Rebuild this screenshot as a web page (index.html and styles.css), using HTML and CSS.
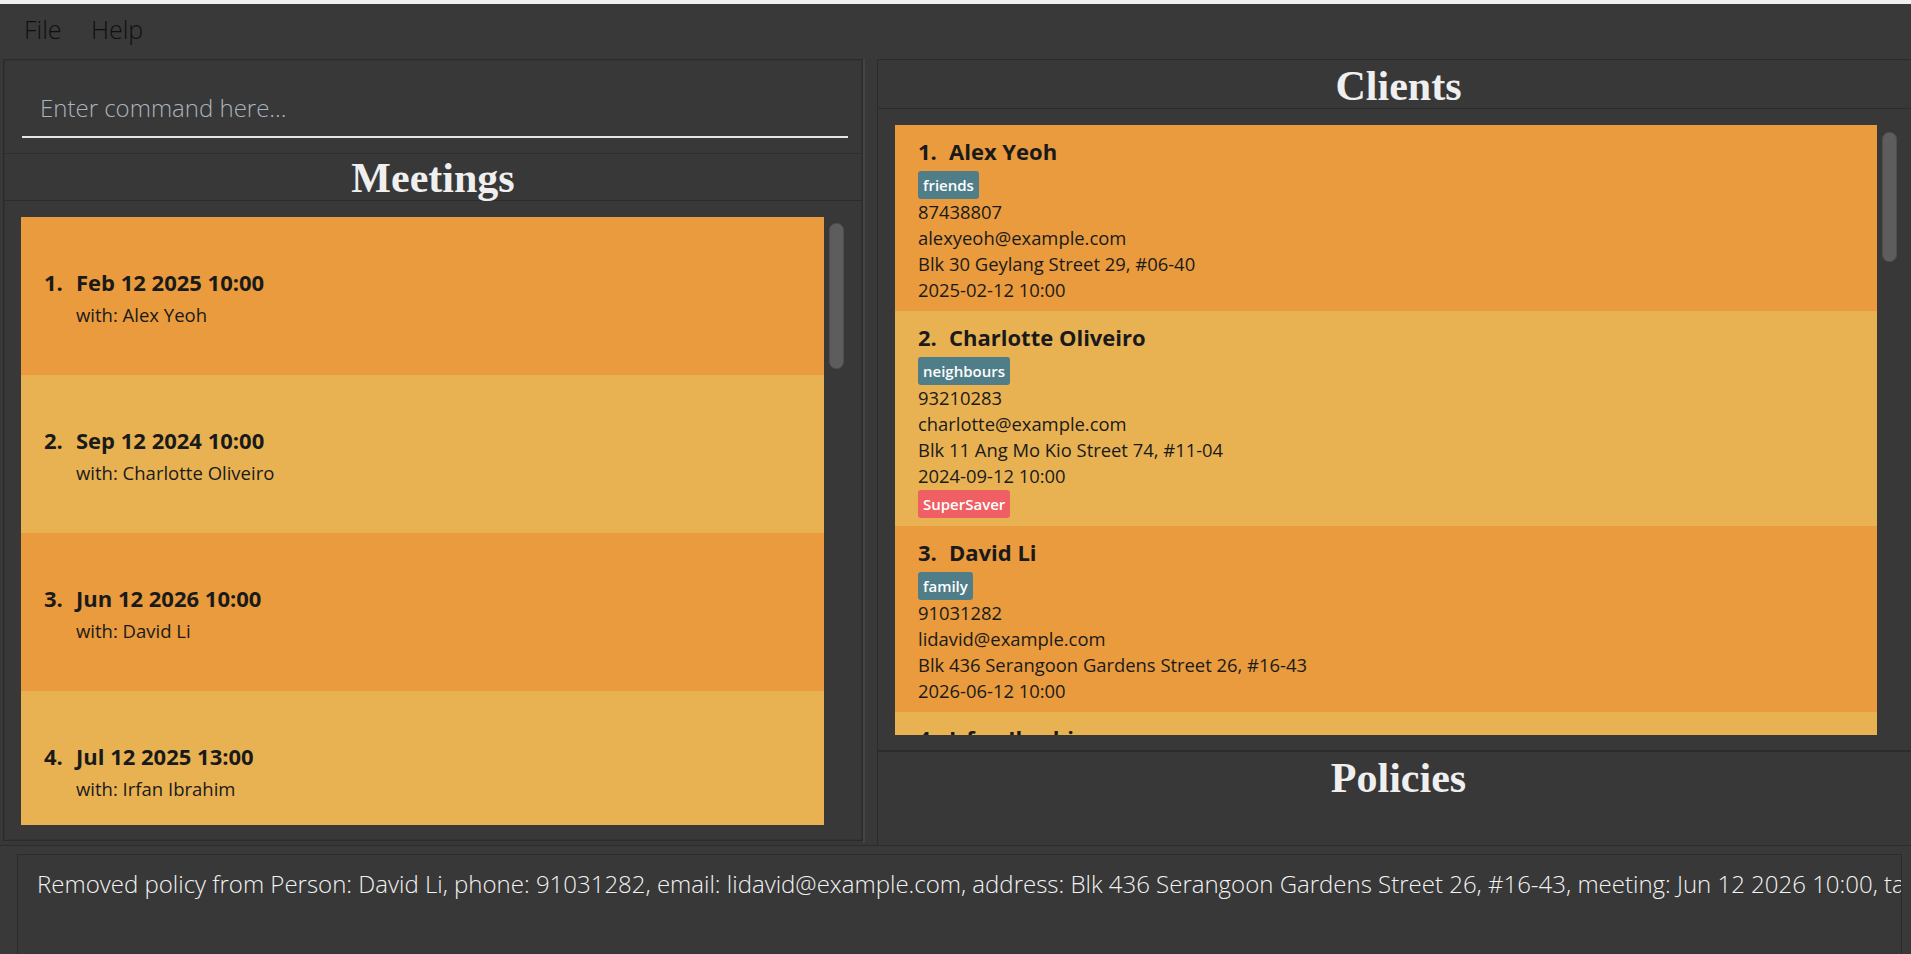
FILE: index.html
```html
<!DOCTYPE html>
<html lang="en">
<head>
<meta charset="utf-8">
<title>AddressBook</title>
<link rel="stylesheet" href="styles.css">
</head>
<body>
<div class="app">
  <div class="chrome"></div>
  <div class="menubar">
    <span class="menu-item file">File</span>
    <span class="menu-item">Help</span>
  </div>
  <div class="main">
    <div class="col-left">
      <div class="command-panel">
        <div class="command-field">Enter command here...</div>
      </div>
      <div class="panel-title meetings-title">Meetings</div>
      <div class="list-panel meetings-panel">
        <div class="viewport">
          <div class="meeting odd">
            <div class="m-title"><span class="m-idx">1.</span>Feb 12 2025 10:00</div>
            <div class="m-with">with: Alex Yeoh</div>
          </div>
          <div class="meeting even">
            <div class="m-title"><span class="m-idx">2.</span>Sep 12 2024 10:00</div>
            <div class="m-with">with: Charlotte Oliveiro</div>
          </div>
          <div class="meeting odd">
            <div class="m-title"><span class="m-idx">3.</span>Jun 12 2026 10:00</div>
            <div class="m-with">with: David Li</div>
          </div>
          <div class="meeting even">
            <div class="m-title"><span class="m-idx">4.</span>Jul 12 2025 13:00</div>
            <div class="m-with">with: Irfan Ibrahim</div>
          </div>
        </div>
        <div class="track meetings-track"><div class="thumb"></div></div>
      </div>
    </div>
    <div class="divider"></div>
    <div class="col-right">
      <div class="panel-title clients-title">Clients</div>
      <div class="list-panel clients-panel">
        <div class="viewport">
          <div class="client odd">
            <div class="c-name"><span class="c-idx">1.</span>Alex Yeoh</div>
            <div class="tags"><span class="tag">friends</span></div>
            <div class="c-line">87438807</div>
            <div class="c-line">alexyeoh@example.com</div>
            <div class="c-line">Blk 30 Geylang Street 29, #06-40</div>
            <div class="c-line">2025-02-12 10:00</div>
          </div>
          <div class="client even">
            <div class="c-name"><span class="c-idx">2.</span>Charlotte Oliveiro</div>
            <div class="tags"><span class="tag">neighbours</span></div>
            <div class="c-line">93210283</div>
            <div class="c-line">charlotte@example.com</div>
            <div class="c-line">Blk 11 Ang Mo Kio Street 74, #11-04</div>
            <div class="c-line">2024-09-12 10:00</div>
            <div class="policies"><span class="tag policy">SuperSaver</span></div>
          </div>
          <div class="client odd">
            <div class="c-name"><span class="c-idx">3.</span>David Li</div>
            <div class="tags"><span class="tag">family</span></div>
            <div class="c-line">91031282</div>
            <div class="c-line">lidavid@example.com</div>
            <div class="c-line">Blk 436 Serangoon Gardens Street 26, #16-43</div>
            <div class="c-line">2026-06-12 10:00</div>
          </div>
          <div class="client even">
            <div class="c-name"><span class="c-idx">4.</span>Irfan Ibrahim</div>
            <div class="tags"><span class="tag">classmates</span></div>
            <div class="c-line">92492021</div>
            <div class="c-line">irfan@example.com</div>
          </div>
        </div>
        <div class="track clients-track"><div class="thumb"></div></div>
      </div>
      <div class="panel-title policies-title">Policies</div>
    </div>
  </div>
  <div class="status-area">
    <div class="status-box">Removed policy from Person: David Li, phone: 91031282, email: lidavid@example.com, address: Blk 436 Serangoon Gardens Street 26, #16-43, meeting: Jun 12 2026 10:00, tags: [family]</div>
  </div>
</div>
</body>
</html>
```

FILE: styles.css
```css
html, body {
  margin: 0;
  padding: 0;
  background: #383838;
  overflow: hidden;
  width: 1911px;
  height: 954px;
}

.app {
  width: 1919px;
  height: 954px;
  display: flex;
  flex-direction: column;
  font-family: "Open Sans", "Noto Sans", sans-serif;
  background: #383838;
}

.chrome {
  height: 4px;
  background: #f0f0f0;
  flex: none;
}

.menubar {
  height: 55px;
  flex: none;
  box-sizing: border-box;
  padding: 9px 0 0 24px;
  display: flex;
  font-size: 25px;
  font-weight: 300;
  line-height: 32px;
  color: #101010;
  background: #393939;
}

.menu-item.file {
  width: 67px;
}

.main {
  display: flex;
  height: 786px;
  flex: none;
}

.col-left {
  margin-left: 3px;
  width: 860px;
  height: 782px;
  display: flex;
  flex-direction: column;
  box-sizing: border-box;
  border: 1px solid #2b2b2b;
  box-shadow: inset 0 0 0 1px #333;
}

.command-panel {
  height: 94px;
  flex: none;
  box-sizing: border-box;
  padding: 32px 14px 0 18px;
  border-bottom: 1px solid #2e2e2e;
}

.command-field {
  font-size: 24px;
  font-weight: 300;
  line-height: 31px;
  color: #aab3bb;
  padding: 0 0 13px 18px;
  border-bottom: 2px solid #e4e4e4;
}

.panel-title {
  font-family: "Liberation Serif", "Times New Roman", serif;
  font-weight: bold;
  font-size: 42px;
  color: #efefef;
  text-align: center;
  flex: none;
  box-sizing: border-box;
}

.meetings-title {
  height: 47px;
  line-height: 47px;
  padding-top: 1px;
  border-bottom: 1px solid #2c2c2c;
}

.clients-title {
  height: 49px;
  line-height: 49px;
  padding-top: 2px;
  border-bottom: 1px solid #2c2c2c;
}

.policies-title {
  height: 93px;
  line-height: 49px;
  padding-top: 2px;
  border-top: 1px solid #2c2c2c;
}

.list-panel {
  display: flex;
  box-sizing: border-box;
  flex: none;
}

.meetings-panel {
  height: 639px;
  padding: 16px 18px 15px 17px;
}

.viewport {
  flex: 1;
  overflow: hidden;
  display: flex;
  flex-direction: column;
}

.track {
  width: 15px;
  margin-left: 5px;
  flex: none;
}

.thumb {
  background: #5d5d5d;
  border: 1px solid #4e4e4e;
  border-radius: 7px;
  box-sizing: border-box;
}

.meetings-track .thumb {
  margin-top: 6px;
  height: 146px;
}

.clients-track .thumb {
  margin-top: 7px;
  height: 130px;
}

.odd { background: #e99b3d; }
.even { background: #e8b253; }

.meeting {
  height: 158px;
  flex: none;
  box-sizing: border-box;
  padding: 3px 0 0 23px;
  display: flex;
  flex-direction: column;
  justify-content: center;
  color: #1a1a1a;
}

.m-title {
  font-size: 22px;
  font-weight: 700;
  line-height: 30px;
}

.m-idx {
  display: inline-block;
  width: 32px;
}

.m-with {
  font-size: 18.5px;
  line-height: 26px;
  margin-top: 5px;
  padding-left: 32px;
}

.divider {
  width: 14px;
  flex: none;
  height: 784px;
  box-sizing: border-box;
  border-left: 2px solid #454545;
}

.col-right {
  width: 1042px;
  flex: none;
  display: flex;
  flex-direction: column;
  box-sizing: border-box;
  border-top: 1px solid #2b2b2b;
  border-left: 1px solid #2b2b2b;
}

.clients-panel {
  height: 642px;
  padding: 16px 22px 15px 17px;
  border-bottom: 1px solid #2c2c2c;
}

.client {
  flex: none;
  box-sizing: border-box;
  padding: 11px 0 8px 23px;
  color: #1a1a1a;
}

.c-name {
  font-size: 22px;
  font-weight: 700;
  line-height: 30px;
}

.c-idx {
  display: inline-block;
  width: 31px;
}

.tags {
  margin-top: 5px;
  display: flex;
}

.policies {
  margin-top: 1px;
  display: flex;
}

.tag {
  height: 28px;
  line-height: 28px;
  padding: 0 5px;
  border-radius: 3px;
  background: #4f7e89;
  color: #ffffff;
  font-size: 15px;
  font-weight: 600;
}

.tag.policy {
  background: #ef5f63;
}

.c-line {
  font-size: 18.4px;
  line-height: 26px;
}

.status-area {
  flex: none;
  height: 109px;
  box-sizing: border-box;
  border-top: 1px solid #2c2c2c;
  padding: 8px 17px 0 17px;
  background: #393939;
}

.status-box {
  height: 100%;
  box-sizing: border-box;
  border: 1px solid #2c2c2c;
  border-bottom: none;
  background: #383838;
  padding: 13px 0 0 19px;
  font-size: 24px;
  font-weight: 300;
  line-height: 31px;
  color: #f2f2f2;
  white-space: nowrap;
  overflow: hidden;
}
```
